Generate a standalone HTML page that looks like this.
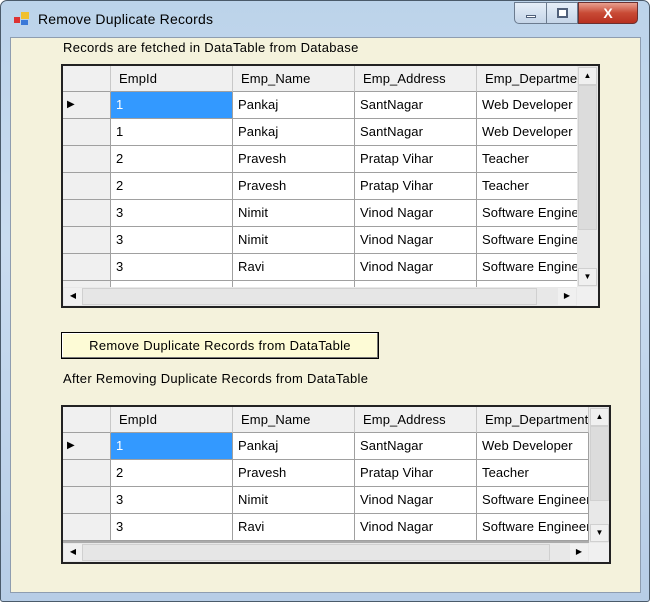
<!DOCTYPE html>
<html><head><style>
*{margin:0;padding:0;box-sizing:border-box}
body{width:650px;height:602px;overflow:hidden;background:#fff;font-family:"Liberation Sans",sans-serif;font-size:13px;color:#000;position:relative}
.frame{position:absolute;left:0;top:0;width:650px;height:602px;background:linear-gradient(#bcd3ea,#c9dcf0 40%,#b7cde6);border:1px solid #4a5a6a;border-radius:7px 7px 3px 3px}
.title{position:absolute;left:38px;top:11px;font-size:14px;color:#000;letter-spacing:0.2px}
.client{position:absolute;left:10px;top:37px;width:631px;height:556px;background:#f4f2dc;border:1px solid #8e9db0}
.a{position:absolute}
.lbl{position:absolute;font-size:13px;letter-spacing:0.3px}
.grid{position:absolute;border:2px solid #222;background:#ababab;overflow:hidden}
.c{position:absolute;height:27px;line-height:26px;padding-left:5px;background:#fff;border-right:1px solid #a0a0a0;border-bottom:1px solid #a0a0a0;white-space:nowrap;overflow:hidden;font-size:13px;letter-spacing:0.1px}
.h{background:#f0f0f0;height:26px;line-height:26px;padding-left:8px;border-right:1px solid #c8c8c8;border-bottom:1px solid #a0a0a0}
.rh{background:#f0f0f0;padding:0}
.sel{background:#3399ff;color:#fff}
.sb{position:absolute;background:#e8e8e8}
.sbb{position:absolute;background:#f0f0f0;border:1px solid #d0d0d0;font-size:8px;text-align:center;line-height:16px;color:#000}
.btn{position:absolute;left:61px;top:332px;width:318px;height:27px;background:#fdfbd6;border:1px solid #000;box-shadow:inset -1px -1px 0 #777,inset 1px 1px 0 #fff;text-align:center;line-height:25px;font-size:13px;letter-spacing:0.3px}
</style></head><body>
<div class="frame"></div>
<svg class="a" style="left:13px;top:10px" width="18" height="18"><rect x="1" y="7" width="6" height="6" fill="#d33"/><rect x="8" y="2" width="8" height="7" fill="#f0c030"/><rect x="8" y="10" width="7" height="5" fill="#3a78d8"/></svg>
<div class="title">Remove Duplicate Records</div>
<div class="a" style="left:514px;top:2px;width:33px;height:22px;border:1px solid #6b7b8f;border-radius:0 0 0 5px;background:linear-gradient(#e5eef8,#c5d5e8)"><div class="a" style="left:11px;top:12px;width:10px;height:3px;background:#fff;border:1px solid #50607a"></div></div>
<div class="a" style="left:547px;top:2px;width:31px;height:22px;border:1px solid #6b7b8f;border-left:none;background:linear-gradient(#e5eef8,#c5d5e8)"><div class="a" style="left:10px;top:5px;width:11px;height:10px;border:2px solid #50607a;background:#fff"></div></div>
<div class="a" style="left:578px;top:2px;width:60px;height:22px;border:1px solid #6b3030;border-radius:0 0 5px 0;background:linear-gradient(#e8a090,#c84a35 50%,#b83020);color:#fff;font-weight:bold;text-align:center;line-height:20px;font-size:14px">X</div>
<div class="client"></div>
<div class="lbl" style="left:63px;top:40px">Records are fetched in DataTable from Database</div>

<div class="grid" style="left:61px;top:64px;width:539px;height:244px">
<div class="c h rh" style="left:0;top:0;width:48px"></div>
<div class="c h" style="left:48px;top:0;width:122px">EmpId</div>
<div class="c h" style="left:170px;top:0;width:122px">Emp_Name</div>
<div class="c h" style="left:292px;top:0;width:122px">Emp_Address</div>
<div class="c h" style="left:414px;top:0;width:110px">Emp_Departmen</div>
<div class="c rh" style="left:0;top:26px;width:48px;font-size:10px;padding-left:4px">&#9654;</div>
<div class="c sel" style="left:48px;top:26px;width:122px">1</div><div class="c" style="left:170px;top:26px;width:122px">Pankaj</div><div class="c" style="left:292px;top:26px;width:122px">SantNagar</div><div class="c" style="left:414px;top:26px;width:110px">Web Developer</div>
<div class="c rh" style="left:0;top:53px;width:48px"></div>
<div class="c" style="left:48px;top:53px;width:122px">1</div><div class="c" style="left:170px;top:53px;width:122px">Pankaj</div><div class="c" style="left:292px;top:53px;width:122px">SantNagar</div><div class="c" style="left:414px;top:53px;width:110px">Web Developer</div>
<div class="c rh" style="left:0;top:80px;width:48px"></div>
<div class="c" style="left:48px;top:80px;width:122px">2</div><div class="c" style="left:170px;top:80px;width:122px">Pravesh</div><div class="c" style="left:292px;top:80px;width:122px">Pratap Vihar</div><div class="c" style="left:414px;top:80px;width:110px">Teacher</div>
<div class="c rh" style="left:0;top:107px;width:48px"></div>
<div class="c" style="left:48px;top:107px;width:122px">2</div><div class="c" style="left:170px;top:107px;width:122px">Pravesh</div><div class="c" style="left:292px;top:107px;width:122px">Pratap Vihar</div><div class="c" style="left:414px;top:107px;width:110px">Teacher</div>
<div class="c rh" style="left:0;top:134px;width:48px"></div>
<div class="c" style="left:48px;top:134px;width:122px">3</div><div class="c" style="left:170px;top:134px;width:122px">Nimit</div><div class="c" style="left:292px;top:134px;width:122px">Vinod Nagar</div><div class="c" style="left:414px;top:134px;width:110px">Software Engineer</div>
<div class="c rh" style="left:0;top:161px;width:48px"></div>
<div class="c" style="left:48px;top:161px;width:122px">3</div><div class="c" style="left:170px;top:161px;width:122px">Nimit</div><div class="c" style="left:292px;top:161px;width:122px">Vinod Nagar</div><div class="c" style="left:414px;top:161px;width:110px">Software Engineer</div>
<div class="c rh" style="left:0;top:188px;width:48px"></div>
<div class="c" style="left:48px;top:188px;width:122px">3</div><div class="c" style="left:170px;top:188px;width:122px">Ravi</div><div class="c" style="left:292px;top:188px;width:122px">Vinod Nagar</div><div class="c" style="left:414px;top:188px;width:110px">Software Engineer</div>
<div class="c rh" style="left:0;top:215px;width:48px"></div>
<div class="c" style="left:48px;top:215px;width:122px"></div><div class="c" style="left:170px;top:215px;width:122px"></div><div class="c" style="left:292px;top:215px;width:122px"></div><div class="c" style="left:414px;top:215px;width:110px"></div>
<div class="sb" style="left:514px;top:0;width:21px;height:221px"></div>
<div class="sbb" style="left:515px;top:1px;width:19px;height:18px">&#9650;</div>
<div class="sbb" style="left:515px;top:19px;width:19px;height:145px;background:#dcdcdc"></div>
<div class="sbb" style="left:515px;top:202px;width:19px;height:18px">&#9660;</div>
<div class="sb" style="left:0;top:221px;width:535px;height:19px"></div>
<div class="sbb" style="left:1px;top:222px;width:18px;height:17px;border:none">&#9664;</div>
<div class="sbb" style="left:19px;top:222px;width:455px;height:17px;background:#e6e6e6"></div>
<div class="sbb" style="left:495px;top:222px;width:18px;height:17px;border:none">&#9654;</div>
<div class="a" style="left:514px;top:221px;width:21px;height:19px;background:#f0f0f0"></div>
</div>

<div class="btn">Remove Duplicate Records from DataTable</div>
<div class="lbl" style="left:63px;top:371px">After Removing Duplicate Records from DataTable</div>

<div class="grid" style="left:61px;top:405px;width:550px;height:159px">
<div class="c h rh" style="left:0;top:0;width:48px"></div>
<div class="c h" style="left:48px;top:0;width:122px">EmpId</div>
<div class="c h" style="left:170px;top:0;width:122px">Emp_Name</div>
<div class="c h" style="left:292px;top:0;width:122px">Emp_Address</div>
<div class="c h" style="left:414px;top:0;width:112px">Emp_Department</div>
<div class="c rh" style="left:0;top:26px;width:48px;font-size:10px;padding-left:4px">&#9654;</div>
<div class="c sel" style="left:48px;top:26px;width:122px">1</div><div class="c" style="left:170px;top:26px;width:122px">Pankaj</div><div class="c" style="left:292px;top:26px;width:122px">SantNagar</div><div class="c" style="left:414px;top:26px;width:112px">Web Developer</div>
<div class="c rh" style="left:0;top:53px;width:48px"></div>
<div class="c" style="left:48px;top:53px;width:122px">2</div><div class="c" style="left:170px;top:53px;width:122px">Pravesh</div><div class="c" style="left:292px;top:53px;width:122px">Pratap Vihar</div><div class="c" style="left:414px;top:53px;width:112px">Teacher</div>
<div class="c rh" style="left:0;top:80px;width:48px"></div>
<div class="c" style="left:48px;top:80px;width:122px">3</div><div class="c" style="left:170px;top:80px;width:122px">Nimit</div><div class="c" style="left:292px;top:80px;width:122px">Vinod Nagar</div><div class="c" style="left:414px;top:80px;width:112px">Software Engineer</div>
<div class="c rh" style="left:0;top:107px;width:48px"></div>
<div class="c" style="left:48px;top:107px;width:122px">3</div><div class="c" style="left:170px;top:107px;width:122px">Ravi</div><div class="c" style="left:292px;top:107px;width:122px">Vinod Nagar</div><div class="c" style="left:414px;top:107px;width:112px">Software Engineer</div>
<div class="sb" style="left:526px;top:0;width:21px;height:136px"></div>
<div class="sbb" style="left:527px;top:1px;width:19px;height:18px">&#9650;</div>
<div class="sbb" style="left:527px;top:19px;width:19px;height:75px;background:#dcdcdc"></div>
<div class="sbb" style="left:527px;top:117px;width:19px;height:18px">&#9660;</div>
<div class="sb" style="left:0;top:136px;width:547px;height:19px"></div>
<div class="sbb" style="left:1px;top:137px;width:18px;height:17px;border:none">&#9664;</div>
<div class="sbb" style="left:19px;top:137px;width:468px;height:17px;background:#e6e6e6"></div>
<div class="sbb" style="left:507px;top:137px;width:18px;height:17px;border:none">&#9654;</div>
<div class="a" style="left:526px;top:136px;width:21px;height:19px;background:#f0f0f0"></div>
</div>
</body></html>
